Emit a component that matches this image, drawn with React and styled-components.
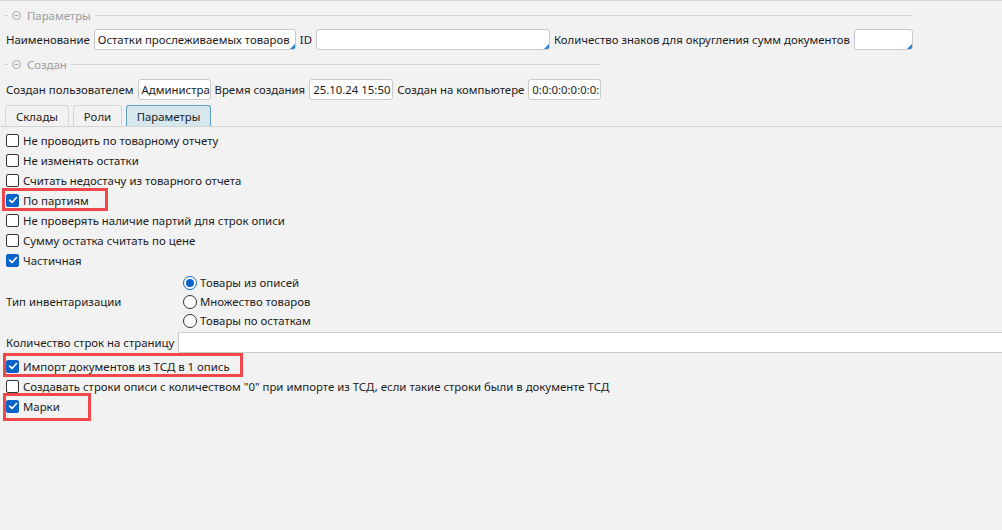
import React from "react";
import styled, { createGlobalStyle } from "styled-components";

const Global = createGlobalStyle`
  html, body { margin: 0; padding: 0; background: #f2f2f2; }
  body { font-family: "Noto Sans", "Open Sans", sans-serif; font-size: 11.4px; color: #1b1b1b; }
  * { box-sizing: border-box; }
`;

const Page = styled.div`
  width: 1002px;
  height: 530px;
  overflow: hidden;
  background: #f2f2f2;
  border-top: 1px solid #d2d2d2;
  padding-top: 4px;
`;

const Group = styled.div`
  width: fit-content;
  margin-top: ${(p) => p.$mt || 0}px;
`;

const GroupHeader = styled.div`
  display: flex;
  align-items: center;
  height: 20px;
  color: #9c9c9c;
  padding-left: 5px;
  &::before {
    content: "";
    width: 3px;
    height: 1px;
    background: #d0d0d0;
    margin-right: 4px;
  }
  &::after {
    content: "";
    flex: 1;
    height: 1px;
    background: #d6d6d6;
    margin-left: 4px;
  }
`;

const Toggle = styled.svg`
  width: 9px;
  height: 9px;
  margin-right: 6px;
  flex: none;
`;

const FieldRow = styled.div`
  display: flex;
  align-items: center;
  gap: 4px;
  height: 21px;
  padding-left: 6px;
  margin-top: ${(p) => p.$mt || 0}px;
  white-space: nowrap;
`;

const Label = styled.span`
  white-space: nowrap;
`;

const Input = styled.div`
  position: relative;
  width: ${(p) => p.$w}px;
  height: 21px;
  background: #fff;
  border: 1px solid #c9c9c9;
  border-radius: 3px;
  padding: 0 3px;
  line-height: 19px;
  overflow: hidden;
  white-space: nowrap;
  flex: none;
  ${(p) =>
    p.$corner &&
    `&::after {
      content: "";
      position: absolute;
      right: 0;
      bottom: 0;
      border-style: solid;
      border-width: 0 0 5px 5px;
      border-color: transparent transparent #1f7fd1 transparent;
    }`}
`;

const TabBar = styled.div`
  display: flex;
  gap: 4px;
  padding-left: 5px;
  margin-top: 5px;
  border-bottom: 1px solid #d3d3d3;
`;

const Tab = styled.div`
  height: 21px;
  width: ${(p) => p.$w}px;
  display: flex;
  align-items: center;
  justify-content: center;
  border: 1px solid ${(p) => (p.$active ? "#5e9fbc" : "#d6d6d6")};
  border-bottom: none;
  border-radius: 3px 3px 0 0;
  background: ${(p) => (p.$active ? "#d6e7ee" : "#f2f2f2")};
  color: #1b1b1b;
`;

const List = styled.div`
  display: flex;
  flex-direction: column;
  padding-left: 6px;
  margin-top: ${(p) => p.$mt || 0}px;
`;

const CheckRow = styled.div`
  position: relative;
  display: flex;
  align-items: center;
  gap: 4px;
  height: 20px;
  white-space: nowrap;
`;

const Box = styled.span`
  width: 13px;
  height: 13px;
  border-radius: 2px;
  border: 1px solid ${(p) => (p.$on ? "#0a63c9" : "#333")};
  background: ${(p) => (p.$on ? "#0a63c9" : "#fff")};
  display: flex;
  align-items: center;
  justify-content: center;
  flex: none;
`;

const Highlight = styled.span`
  position: absolute;
  left: ${(p) => p.$l}px;
  top: ${(p) => p.$t}px;
  width: ${(p) => p.$w}px;
  height: ${(p) => p.$h}px;
  border: 3px solid #f1474a;
  pointer-events: none;
`;

const TypeSection = styled.div`
  display: grid;
  grid-template-columns: 172px 1fr;
  align-items: center;
  padding-left: 6px;
  margin-top: 3px;
`;

const RadioList = styled.div`
  display: flex;
  flex-direction: column;
  padding-left: 5px;
`;

const RadioRow = styled.div`
  display: flex;
  align-items: center;
  gap: 3px;
  height: 19px;
`;

const Radio = styled.span`
  width: 14px;
  height: 14px;
  border-radius: 50%;
  border: 1px solid ${(p) => (p.$on ? "#0a63c9" : "#333")};
  background: #fff;
  display: flex;
  align-items: center;
  justify-content: center;
  flex: none;
  &::after {
    content: "";
    display: ${(p) => (p.$on ? "block" : "none")};
    width: 8px;
    height: 8px;
    border-radius: 50%;
    background: #0a63c9;
  }
`;

const CountRow = styled.div`
  display: grid;
  grid-template-columns: 172px 1fr;
  align-items: center;
  padding-left: 6px;
  margin-top: 2px;
  height: 21px;
`;

const WideInput = styled.div`
  height: 21px;
  background: #fff;
  border: 1px solid #c9c9c9;
  border-right: none;
  border-radius: 2px 0 0 2px;
`;

const Check = () => (
  <svg width="10" height="10" viewBox="0 0 10 10">
    <path d="M1.6 5.2 L4 7.5 L8.5 2.5" fill="none" stroke="#fff" strokeWidth="1.6" strokeLinecap="round" strokeLinejoin="round" />
  </svg>
);

const CheckItem = ({ on, children, hl }) => (
  <CheckRow>
    <Box $on={on}>{on && <Check />}</Box>
    <span>{children}</span>
    {hl && <Highlight $l={hl[0]} $t={hl[1]} $w={hl[2]} $h={hl[3]} />}
  </CheckRow>
);

const GroupTitle = ({ children }) => (
  <GroupHeader>
    <Toggle viewBox="0 0 9 9">
      <circle cx="4.5" cy="4.5" r="4" fill="none" stroke="#a8a8a8" strokeWidth="1" />
      <path d="M2.5 4.5 H6.5" stroke="#a8a8a8" strokeWidth="1" />
    </Toggle>
    {children}
  </GroupHeader>
);

export default function App() {
  return (
    <>
      <Global />
      <Page>
        <Group>
          <GroupTitle>Параметры</GroupTitle>
          <FieldRow $mt={4}>
            <Label>Наименование</Label>
            <Input $w={202} $corner>Остатки прослеживаемых товаров</Input>
            <Label>ID</Label>
            <Input $w={234} $corner />
            <Label>Количество знаков для округления сумм документов</Label>
            <Input $w={59} $corner />
          </FieldRow>
        </Group>
        <Group $mt={4}>
          <GroupTitle>Создан</GroupTitle>
          <FieldRow $mt={5}>
            <Label>Создан пользователем</Label>
            <Input $w={73}>Администратор</Input>
            <Label>Время создания</Label>
            <Input $w={84}>25.10.24 15:50</Input>
            <Label>Создан на компьютере</Label>
            <Input $w={73}>0:0:0:0:0:0:0:1</Input>
          </FieldRow>
        </Group>
        <TabBar>
          <Tab $w={64}>Склады</Tab>
          <Tab $w={49}>Роли</Tab>
          <Tab $w={85} $active>Параметры</Tab>
        </TabBar>
        <List $mt={3}>
          <CheckItem>Не проводить по товарному отчету</CheckItem>
          <CheckItem>Не изменять остатки</CheckItem>
          <CheckItem>Считать недостачу из товарного отчета</CheckItem>
          <CheckItem on hl={[-4, -2, 106, 23]}>По партиям</CheckItem>
          <CheckItem>Не проверять наличие партий для строк описи</CheckItem>
          <CheckItem>Сумму остатка считать по цене</CheckItem>
          <CheckItem on>Частичная</CheckItem>
        </List>
        <TypeSection>
          <Label>Тип инвентаризации</Label>
          <RadioList>
            <RadioRow>
              <Radio $on />
              <span>Товары из описей</span>
            </RadioRow>
            <RadioRow>
              <Radio />
              <span>Множество товаров</span>
            </RadioRow>
            <RadioRow>
              <Radio />
              <span>Товары по остаткам</span>
            </RadioRow>
          </RadioList>
        </TypeSection>
        <CountRow>
          <Label>Количество строк на страницу</Label>
          <WideInput />
        </CountRow>
        <List $mt={3}>
          <CheckItem on hl={[-3, -3, 240, 24]}>Импорт документов из ТСД в 1 опись</CheckItem>
          <CheckItem>Создавать строки описи с количеством "0" при импорте из ТСД, если такие строки были в документе ТСД</CheckItem>
          <CheckItem on hl={[-3, -3, 88, 28]}>Марки</CheckItem>
        </List>
      </Page>
    </>
  );
}
